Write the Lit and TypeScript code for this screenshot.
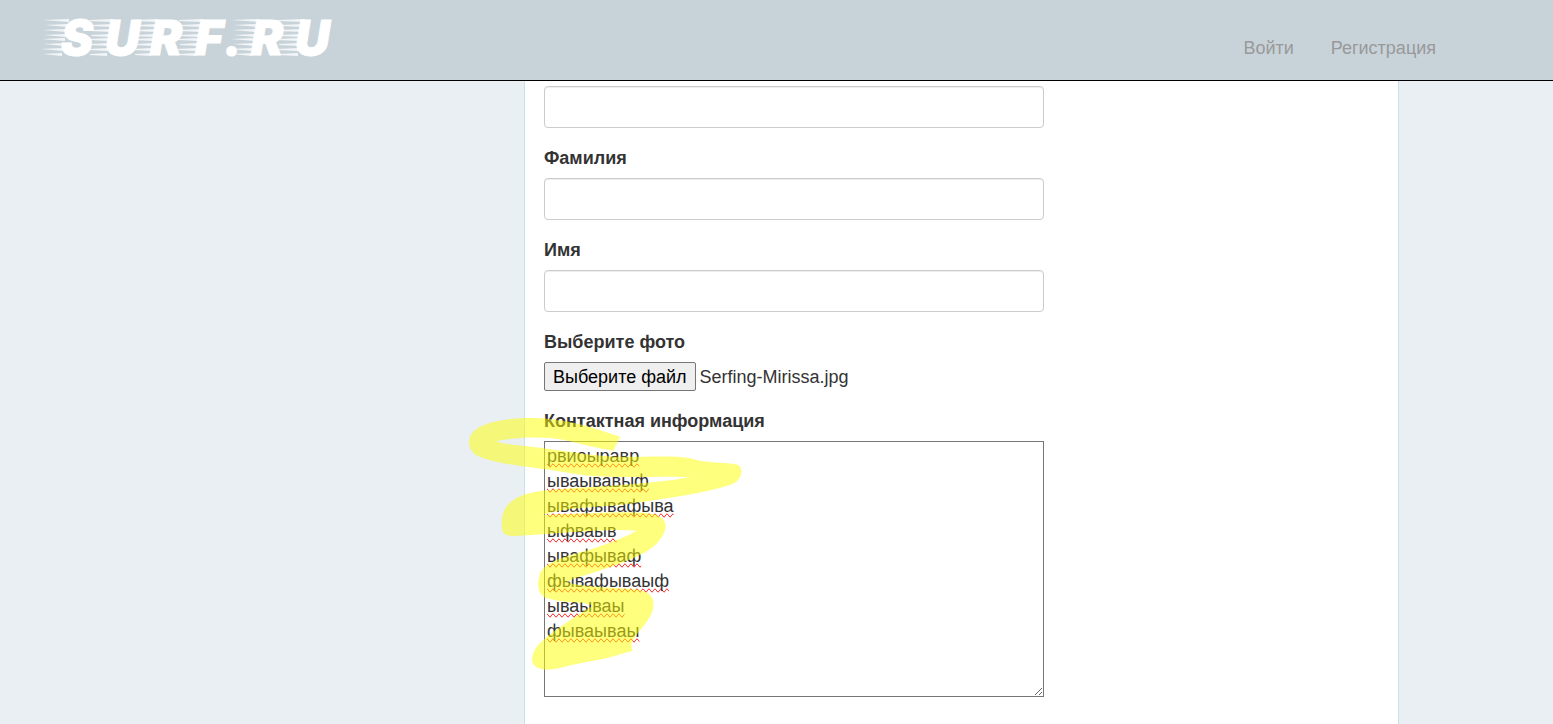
import { LitElement, html, css, svg } from "lit";
import { customElement, state } from "lit/decorators.js";

/* Speed lines trailing to the left of each logo letter: [start, end, width at the thin end]. */
const STREAKS: Array<[number, number, number]> = [
  [3, 24, 0],
  [50, 69, 1],
  [95, 113, 1],
  [139, 158, 1],
  [192, 214, 0],
  [238, 260, 1],
];

@customElement("surf-header")
export class SurfHeader extends LitElement {
  static styles = css`
    :host {
      display: block;
    }
    .bar {
      display: flex;
      justify-content: space-between;
      height: 80px;
      background: #c8d3d9;
      border-bottom: 1px solid #000;
      padding: 0 117px 0 40px;
    }
    .brand {
      display: block;
      padding-top: 4px;
    }
    .logo {
      display: block;
      width: 300px;
      height: 66px;
      overflow: visible;
    }
    .letters {
      font: italic 900 48px Inter, Roboto, sans-serif;
      fill: #fff;
      stroke: #fff;
      stroke-width: 1px;
    }
    .streak {
      fill: #f3f6f8;
    }
    .nav {
      display: flex;
      gap: 37px;
      padding-top: 35px;
      line-height: 26px;
    }
    .link {
      color: #999;
      text-decoration: none;
    }
  `;

  render() {
    return html`
      <header class="bar">
        <a class="brand" href="#" aria-label="SURF.RU">
          <svg class="logo" viewBox="0 0 300 66">
            ${STREAKS.map(([a, b, w]) =>
              [0, 1, 2, 3, 4, 5, 6, 7].map((i) => {
                const y = 16 + i * 5 - (i > 3 ? 1 : 0);
                const s = a + (i % 2) * 2 - Math.floor(i / 3);
                const e = b + 5 - i;
                return svg`<path class="streak" d="M${s} ${y}L${e} ${y - 1}V${y + 2}L${s} ${y + w}Z"></path>`;
              })
            )}
            <text class="letters" x="21 65 110 155 184 211 255" y="51">SURF.RU</text>
          </svg>
        </a>
        <nav class="nav">
          <a class="link" href="#login">Войти</a>
          <a class="link" href="#register">Регистрация</a>
        </nav>
      </header>
    `;
  }
}

@customElement("app-root")
export class AppRoot extends LitElement {
  @state() private fileName = "Serfing-Mirissa.jpg";

  private contact = [
    "рвиоыравр",
    "ываывавыф",
    "ывафывафыва",
    "ыфваыв",
    "ывафываф",
    "фывафываыф",
    "ываываы",
    "фываываы",
  ].join("\n");

  static styles = css`
    :host {
      display: flex;
      flex-direction: column;
      min-height: 100vh;
      box-sizing: border-box;
      background: #eaeff3;
      color: #333;
      font: 18px/26px "Liberation Sans", Arial, sans-serif;
    }
    .page {
      flex: 1;
      display: grid;
      grid-template-columns: 524fr 875fr 154fr;
    }
    .panel {
      grid-column: 2;
      background: #fff;
      border: solid #c1e5e8;
      border-width: 0 1px;
      padding: 5px 19px 20px;
    }
    .form {
      display: flex;
      flex-direction: column;
      gap: 18px;
      max-width: 500px;
    }
    .group {
      display: flex;
      flex-direction: column;
      gap: 8px;
      position: relative;
    }
    .label {
      font-weight: 700;
      line-height: 24px;
    }
    .field {
      box-sizing: border-box;
      width: 100%;
      height: 42px;
      padding: 6px 12px;
      border: 1px solid #ccc;
      border-radius: 4px;
      box-shadow: inset 0 1px 1px rgba(0, 0, 0, 0.075);
      background: #fff;
      color: #555;
      font: inherit;
    }
    .file {
      display: flex;
      align-items: center;
      gap: 4px;
    }
    .pick {
      height: 29px;
      padding: 0 8px;
      border: 1px solid #767676;
      border-radius: 2px;
      background: #efefef;
      color: #000;
      font: inherit;
    }
    .area {
      box-sizing: border-box;
      width: 100%;
      padding: 2px;
      border: 1px solid #767676;
      background: #fff;
      color: inherit;
      font: inherit;
      line-height: 25px;
      text-decoration: spelling-error;
    }
    .marker {
      position: absolute;
      left: -84px;
      top: -10px;
      width: 300px;
      height: 280px;
      pointer-events: none;
      fill: #ff0;
      opacity: 0.5;
    }
  `;

  private openPicker() {
    this.renderRoot.querySelector<HTMLInputElement>("#photo")?.click();
  }

  private onFile(e: Event) {
    const file = (e.target as HTMLInputElement).files?.[0];
    if (file) this.fileName = file.name;
  }

  render() {
    return html`
      <surf-header></surf-header>
      <main class="page">
        <section class="panel">
          <form class="form">
            <div class="group">
              <input class="field" type="text" aria-label="Логин" />
            </div>
            <div class="group">
              <label class="label" for="surname">Фамилия</label>
              <input class="field" id="surname" type="text" />
            </div>
            <div class="group">
              <label class="label" for="name">Имя</label>
              <input class="field" id="name" type="text" />
            </div>
            <div class="group">
              <label class="label" for="photo">Выберите фото</label>
              <div class="file">
                <input id="photo" type="file" accept="image/*" hidden @change=${this.onFile} />
                <button class="pick" type="button" @click=${this.openPicker}>Выберите файл</button>
                <span>${this.fileName}</span>
              </div>
            </div>
            <div class="group">
              <label class="label" for="contact">Контактная информация</label>
              <textarea class="area" id="contact" rows="10" spellcheck="false" .value=${this.contact}></textarea>
              <svg class="marker" viewBox="0 -18 900 840" aria-hidden="true">
                <path
                  d="M480 95C400 70 350 48 240 40C170 36 90 45 50 72C20 92 20 130 48 150C90 172 160 180 250 192C310 200 350 210 400 213C500 220 600 212 690 217C630 228 560 234 470 241C360 250 240 252 190 270C140 288 120 320 126 372C130 398 160 394 200 391C320 384 440 370 530 377C480 405 420 425 350 445C290 462 250 480 240 505C228 545 235 570 262 580C300 592 340 590 380 596C400 600 400 602 385 610C340 640 290 670 250 705C215 735 210 765 222 780C240 800 280 796 320 784C380 768 440 764 480 748L516 738L514 715C530 680 580 640 580 602C583 570 560 556 520 553C460 548 400 548 330 535C320 530 330 524 350 518C440 490 560 455 595 410C625 375 625 345 590 330C540 315 420 325 245 330C350 300 420 310 530 293C630 280 740 262 810 240C850 228 850 190 835 180C800 170 740 178 690 160C640 150 560 157 470 155C400 152 330 140 240 128C180 122 130 118 108 108C170 96 250 94 310 104C360 115 410 130 460 137Z"
                ></path>
              </svg>
            </div>
          </form>
        </section>
      </main>
    `;
  }
}
